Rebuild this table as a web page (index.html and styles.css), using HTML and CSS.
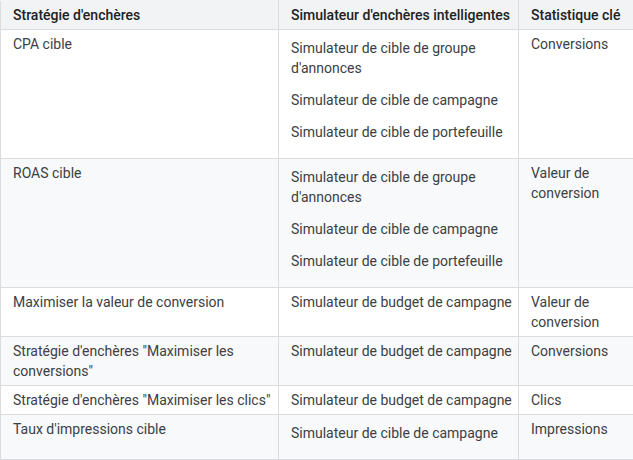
FILE: index.html
```html
<!DOCTYPE html>
<html lang="fr">
<head>
<meta charset="utf-8">
<link rel="stylesheet" href="styles.css">
</head>
<body>
<table class="bids">
  <colgroup>
    <col class="c1">
    <col class="c2">
    <col class="c3">
  </colgroup>
  <thead>
    <tr>
      <th>Stratégie d'enchères</th>
      <th>Simulateur d'enchères intelligentes</th>
      <th>Statistique clé</th>
    </tr>
  </thead>
  <tbody>
    <tr>
      <td>CPA cible</td>
      <td>
        <p>Simulateur de cible de groupe d'annonces</p>
        <p>Simulateur de cible de campagne</p>
        <p>Simulateur de cible de portefeuille</p>
      </td>
      <td>Conversions</td>
    </tr>
    <tr>
      <td>ROAS cible</td>
      <td>
        <p>Simulateur de cible de groupe d'annonces</p>
        <p>Simulateur de cible de campagne</p>
        <p>Simulateur de cible de portefeuille</p>
      </td>
      <td>Valeur de conversion</td>
    </tr>
    <tr>
      <td>Maximiser la valeur de conversion</td>
      <td>Simulateur de budget de campagne</td>
      <td>Valeur de conversion</td>
    </tr>
    <tr>
      <td>Stratégie d'enchères "Maximiser les conversions"</td>
      <td>Simulateur de budget de campagne</td>
      <td>Conversions</td>
    </tr>
    <tr>
      <td>Stratégie d'enchères "Maximiser les clics"</td>
      <td>Simulateur de budget de campagne</td>
      <td>Clics</td>
    </tr>
    <tr>
      <td>Taux d'impressions cible</td>
      <td><p>Simulateur de cible de campagne</p></td>
      <td>Impressions</td>
    </tr>
  </tbody>
</table>
</body>
</html>
```

FILE: styles.css
```css
html, body {
  margin: 0;
  padding: 0;
  background: #ffffff;
}

.bids {
  width: 633px;
  border-collapse: collapse;
  table-layout: fixed;
  font-family: Roboto, "Liberation Sans", sans-serif;
  font-size: 14px;
  line-height: 20px;
  color: #3c4043;
}

.c1 { width: 278px; }
.c2 { width: 240px; }
.c3 { width: 115px; }

.bids th,
.bids td {
  border: 1px solid #dadce0;
  padding: 4px 6px 4px 12px;
  text-align: left;
  vertical-align: top;
}

.bids th {
  border-top-color: #f1f3f4;
  background: #f1f3f4;
  font-weight: 500;
  color: #202124;
}

.bids tbody tr:nth-child(even) td {
  background: #f8f9fa;
}

.bids p {
  margin: 4px 0 12px;
}
```
